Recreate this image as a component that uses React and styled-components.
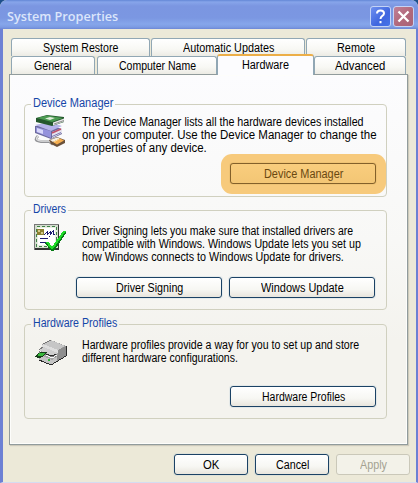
import React, { useLayoutEffect, useRef, useState } from "react";
import styled, { createGlobalStyle, css } from "styled-components";

const Global = createGlobalStyle`
  * { box-sizing: border-box; }
  body { margin: 0; overflow: hidden; background: #1d4f8c; }
  button { font: inherit; color: inherit; padding: 0; margin: 0; }
`;

const Dialog = styled.main`
  width: 418px;
  height: 483px;
  display: flex;
  flex-direction: column;
  font: 12px/13px "Liberation Sans", Arial, sans-serif;
  color: #000;
  background: #ece9d8;
  border-radius: 7px 7px 0 0;
  overflow: hidden;
`;

const TitleBar = styled.header`
  height: 29px;
  flex: none;
  display: flex;
  align-items: center;
  padding: 3px 4px 0 7px;
  background: linear-gradient(#6387d6 0, #87a5ea 2px, #7b96e1 6px, #7b97e2 18px, #86a6eb 24px, #7d9ce3 27px, #6c87d6 29px);
`;

const TitleText = styled.h1`
  margin: 0;
  flex: 1;
  font: 600 13px/18px "Open Sans", sans-serif;
  color: #dce6fb;
`;

const Caption = styled.button`
  width: 21px;
  height: 21px;
  margin-left: 2px;
  display: grid;
  place-items: center;
  border: 1px solid #c4d3f6;
  border-radius: 3px;
  background: ${(p) => (p.$close ? "linear-gradient(135deg, #c08097, #b1687b 55%, #a96478)" : "linear-gradient(135deg, #6f90ef, #3f66df 60%, #4773e8)")};
`;

const Body = styled.div`
  flex: 1;
  display: flex;
  flex-direction: column;
  border: solid #6d81d4;
  border-width: 0 2px 1px 3px;
  border-bottom-color: #d5dcf1;
  padding: 9px 6px 0 6px;
`;

const TabRow = styled.div`
  display: flex;
  height: 18px;
  gap: ${(p) => p.$gap};
  padding: 0 2px;
`;

const Tab = styled.button`
  width: ${(p) => p.$w}px;
  height: 18px;
  flex: none;
  padding-top: ${(p) => (p.$active ? 1 : 2)}px;
  border: 1px solid #91a7b4;
  border-bottom: 0;
  border-radius: 3px 3px 0 0;
  background: linear-gradient(#fff, #f8f8f4 60%, #ecebe4);
  ${(p) => p.$after && css`margin-left: 2px;`}
  ${(p) => p.$active && css`
    height: 21px;
    margin-top: -2px;
    z-index: 1;
    border-top: 2px solid #ecae48;
    background: #fcfcfe;
    padding-bottom: 2px;
  `}
`;

const Panel = styled.section`
  height: 371px;
  width: 399px;
  flex: none;
  padding: 29px 20px 0 14px;
  border: 1px solid #919b9c;
  box-shadow: 1px 1px 1px #cdcabb, inset 0 0 0 1px #fdfdfb;
  background: linear-gradient(#fcfcfe, #f8f8f6 45%, #f4f3ee 72%, #f4f3ee);
`;

const Group = styled.section`
  position: relative;
  width: 363px;
  height: ${(p) => p.$h}px;
  margin-bottom: ${(p) => p.$gap || 0}px;
  padding-top: ${(p) => p.$top}px;
  border: 1px solid #d0d0bf;
  border-radius: 4px;
`;

const Legend = styled.h2`
  position: absolute;
  left: 6px;
  top: -8px;
  margin: 0;
  padding: 0 2px;
  font: inherit;
  color: #1446a8;
  background: ${(p) => p.$bg};
`;

const Info = styled.div`
  height: ${(p) => p.$h}px;
  display: grid;
  grid-template-columns: 48px 1fr;
  padding-left: 9px;
`;

const Art = styled.svg`
  display: block;
  width: 34px;
  height: 34px;
  margin-top: ${(p) => p.$top}px;
`;

const Copy = styled.p`
  margin: 0;
  display: flex;
  flex-direction: column;
`;

const Actions = styled.div`
  display: flex;
  justify-content: flex-end;
  gap: ${(p) => p.$gap || 0}px;
  padding-right: ${(p) => p.$right || 0}px;
`;

const Button = styled.button`
  width: ${(p) => p.$w || 146}px;
  height: 21px;
  display: flex;
  align-items: center;
  justify-content: center;
  padding-top: 1px;
  border: 1px solid #1b4265;
  border-radius: 3px;
  background: linear-gradient(#fff, #f7f7f3 60%, #e8e5dd);
  box-shadow: 0 0 0 1px rgba(190, 207, 218, 0.3);
  ${(p) => p.$tinted && css`
    border-color: #83602a;
    background: linear-gradient(#f9cd7d, #f3c675);
    color: #6a4811;
    box-shadow: 0 0 1px #ae8239;
  `}
  ${(p) => p.$disabled && css`
    border-color: #cac8b9;
    background: #f3f2e9;
    color: #a5a291;
    box-shadow: none;
  `}
`;

const Highlight = styled.div`
  width: 165px;
  height: 40px;
  padding: 9px 0 0 9px;
  border-radius: 11px;
  background: #f7ca7c;
`;

const Footer = styled.footer`
  display: flex;
  justify-content: flex-end;
  gap: 7px;
  width: 401px;
  padding-top: 9px;
`;

const FitBox = styled.span`
  display: inline-block;
  width: ${(p) => p.$w}px;
  white-space: nowrap;
  text-align: left;
`;

const FitInner = styled.span`
  display: inline-block;
  transform-origin: 0 50%;
`;

function Fit({ w, children }) {
  const ref = useRef(null);
  const [scale, setScale] = useState(1);
  useLayoutEffect(() => setScale(w / ref.current.offsetWidth), [w, children]);
  return (
    <FitBox $w={w}>
      <FitInner ref={ref} style={{ transform: `scaleX(${scale})` }}>{children}</FitInner>
    </FitBox>
  );
}

const Lines = ({ items }) => (
  <Copy>{items.map(([w, t]) => <Fit key={t} w={w}>{t}</Fit>)}</Copy>
);

const DeviceArt = () => (
  <Art $top={-1} viewBox="0 0 34 34">
    <path d="M4 21q-5 5 3 5.500l8 0 4 3" fill="none" stroke="#929397" strokeWidth="2.800" />
    <path d="M4 21q-4 4.500 3 5l8 0 4 3" fill="none" stroke="#dedfe1" strokeWidth="1.300" />
    <path d="M1 11l15-1 12 4v5l-11 5L1 18z" fill="#6c6a9c" />
    <path d="M1 10l14-3 13 4-11 5z" fill="#b5b3ea" />
    <path d="M2 12l15 4v7L2 17z" fill="#9492dc" />
    <path d="M3 13l6 2v4l-6-2z" fill="#d8d7fa" />
    <path d="M18 17l10-4v5l-10 5z" fill="#e6e4ee" />
    <path d="M18 18l9-4" stroke="#c0506a" strokeWidth="1.500" />
    <path d="M18 21.500l9-4" stroke="#7b79b5" />
    <path d="M2 3l11-3 17 2v5l-12 4L2 7z" fill="#24572d" />
    <path d="M3 3l10-2.500 16 2.500-11 4z" fill="#4c9a52" />
    <path d="M11 3.500l5-1.500 5 1-5 2z" fill="#e2eedc" />
    <path d="M19 7.500l11-4v3l-11 4z" fill="#e8e9e8" />
    <path d="M20 9l10-3.500" stroke="#777" strokeWidth=".8" />
    <path d="M15 25l8-3 8 3v3l-8 4-6-3z" fill="#6b523c" />
    <path d="M16 25l7-2.500 3 1-7 3.500z" fill="#f5efe4" />
    <path d="M19 27l7-3.500 4 2-7 4z" fill="#f5ae50" />
    <path d="M20 27l5-3" stroke="#ffdf9c" />
  </Art>
);

const SigningArt = () => (
  <Art $top={-1} viewBox="0 0 34 34" shapeRendering="crispEdges">
    <path d="M0 0h25v26H0z" fill="#777" />
    <path d="M1 1h24v25H1z" fill="#333" />
    <path d="M1 1h23v23H1z" fill="#d3dccd" />
    <path d="M2.500 2.500h20v20h-20z" fill="#e9efe2" stroke="#3e8047" strokeDasharray="3 2" />
    <path d="M4 4h17v17H4z" fill="#fff" />
    <path d="M3 5h7v6H3z" fill="#8c8031" />
    <path d="M4 6h2v2H4zM7 8h2v2H7z" fill="#d3ca8a" />
    <path d="M10 11l3-3v3l3-3v3l3-4v3h2M6 14.500h8M6 18.500h6" fill="none" stroke="#1d1b72" />
    <path d="M11 19h4l3 4L29 7h3v2L20 27h-3z" fill="#077b15" />
    <path d="M12 18h3l3 5L29 7h3L19 25h-2z" fill="#1fdb27" />
  </Art>
);

const ProfileArt = () => (
  <Art $top={-1} viewBox="0 0 34 34" shapeRendering="crispEdges">
    <path d="M8 6l9-4 15 6v10l-15 9-12-5 2-8z" fill="#a6a6a6" />
    <path d="M9 6l8-4 14 6-7 4z" fill="#c6c6c6" />
    <path d="M9 6l15 6v3L8 9z" fill="#dedede" />
    <path d="M24 12l8-4v10l-9 5z" fill="#8e8e8e" />
    <path d="M5 12l5-3 14 6-5 3z" fill="#cfcfcf" />
    <path d="M5 13l14 5 4-2v2l-4 2L5 15z" fill="#7f7f7f" />
    <path d="M7 17l11 5 5-3v4l-6 4L5 22z" fill="#c4c4c4" />
    <path d="M12 17l6 3 5-3" fill="none" stroke="#fafafa" />
    <path d="M12 16l6 2 4-2M5 22l12 5 15-9V8" fill="none" stroke="#292929" />
    <path d="M9 6l8-4M5 12l4-3" fill="none" stroke="#767676" />
    <path d="M14 21h2v2h-2z" fill="#28b631" />
    <path d="M0 19l4-4 4-1h5l-4 5-4 1z" fill="#173f19" />
    <path d="M3 17l3-2h5l-3 3H4z" fill="#36b83a" />
  </Art>
);

export default function App() {
  return (
    <>
      <Global />
      <Dialog>
        <TitleBar>
          <TitleText><Fit w={111}>System Properties</Fit></TitleText>
          <Caption aria-label="Help">
            <svg width="13" height="15" viewBox="0 0 13 15"><path d="M3 4.500q0-3 3.500-3T10 4.300q0 1.500-1.700 2.500T6.500 10M6.500 12v2.200" fill="none" stroke="#fff" strokeWidth="2" /></svg>
          </Caption>
          <Caption $close aria-label="Close">
            <svg width="13" height="13" viewBox="0 0 13 13"><path d="M1.500 1.500l10 10m0-10l-10 10" stroke="#fff" strokeWidth="2.300" /></svg>
          </Caption>
        </TitleBar>
        <Body>
          <TabRow $gap="1px">
            <Tab $w={139}><Fit w={75}>System Restore</Fit></Tab>
            <Tab $w={154}><Fit w={91}>Automatic Updates</Fit></Tab>
            <Tab $w={100}><Fit w={38}>Remote</Fit></Tab>
          </TabRow>
          <TabRow $gap="0">
            <Tab $w={84}><Fit w={38}>General</Fit></Tab>
            <Tab $w={120} $after><Fit w={77}>Computer Name</Fit></Tab>
            <Tab $w={97} $active><Fit w={47}>Hardware</Fit></Tab>
            <Tab $w={92}><Fit w={50}>Advanced</Fit></Tab>
          </TabRow>
          <Panel>
            <Group $h={93} $gap={13} $top={11}>
              <Legend $bg="#fbfbfc"><Fit w={80}>Device Manager</Fit></Legend>
              <Info $h={38}>
                <DeviceArt />
                <Lines items={[
                  [282, "The Device Manager lists all the hardware devices installed"],
                  [295, "on your computer. Use the Device Manager to change the"],
                  [125, "properties of any device."],
                ]} />
              </Info>
              <Actions>
                <Highlight><Button $tinted><Fit w={79}>Device Manager</Fit></Button></Highlight>
              </Actions>
            </Group>
            <Group $h={100} $gap={14} $top={14}>
              <Legend $bg="#f8f8f7"><Fit w={33}>Drivers</Fit></Legend>
              <Info $h={52}>
                <SigningArt />
                <Lines items={[
                  [271, "Driver Signing lets you make sure that installed drivers are"],
                  [279, "compatible with Windows. Windows Update lets you set up"],
                  [262, "how Windows connects to Windows Update for drivers."],
                ]} />
              </Info>
              <Actions $gap={7} $right={11}>
                <Button><Fit w={67}>Driver Signing</Fit></Button>
                <Button><Fit w={83}>Windows Update</Fit></Button>
              </Actions>
            </Group>
            <Group $h={95} $top={14}>
              <Legend $bg="#f4f3ef"><Fit w={84}>Hardware Profiles</Fit></Legend>
              <Info $h={47}>
                <ProfileArt />
                <Lines items={[
                  [277, "Hardware profiles provide a way for you to set up and store"],
                  [156, "different hardware configurations."],
                ]} />
              </Info>
              <Actions $right={10}>
                <Button><Fit w={83}>Hardware Profiles</Fit></Button>
              </Actions>
            </Group>
          </Panel>
          <Footer>
            <Button $w={74}><Fit w={16}>OK</Fit></Button>
            <Button $w={74}><Fit w={33}>Cancel</Fit></Button>
            <Button $w={74} $disabled><Fit w={27}>Apply</Fit></Button>
          </Footer>
        </Body>
      </Dialog>
    </>
  );
}
